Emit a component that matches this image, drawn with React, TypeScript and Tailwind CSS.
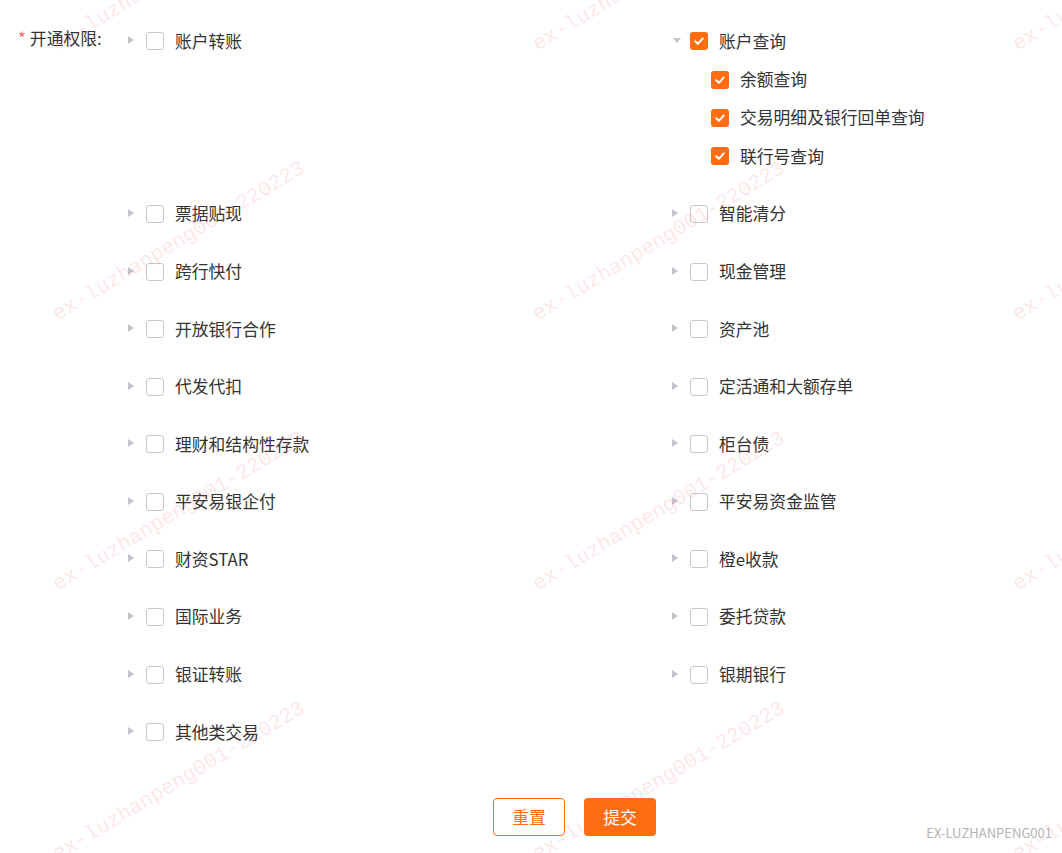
import React from 'react'

type Node = { label: string; checked?: boolean; open?: boolean; children?: Node[] }

const LEFT: Node[] = [
  { label: '账户转账' },
  { label: '票据贴现' },
  { label: '跨行快付' },
  { label: '开放银行合作' },
  { label: '代发代扣' },
  { label: '理财和结构性存款' },
  { label: '平安易银企付' },
  { label: '财资STAR' },
  { label: '国际业务' },
  { label: '银证转账' },
  { label: '其他类交易' },
]

const RIGHT: Node[] = [
  {
    label: '账户查询', checked: true, open: true,
    children: [
      { label: '余额查询', checked: true },
      { label: '交易明细及银行回单查询', checked: true },
      { label: '联行号查询', checked: true },
    ],
  },
  { label: '智能清分' },
  { label: '现金管理' },
  { label: '资产池' },
  { label: '定活通和大额存单' },
  { label: '柜台债' },
  { label: '平安易资金监管' },
  { label: '橙e收款' },
  { label: '委托贷款' },
  { label: '银期银行' },
]

const MARKS: [number, number][] = []
for (const y of [55, 325, 595, 865]) for (const x of [55, 535, 1015]) MARKS.push([x, y])

function Box({ checked }: { checked?: boolean }) {
  if (checked) {
    return (
      <span className="w-[18px] h-[18px] rounded-[3px] bg-[#ff6d12] flex items-center justify-center shrink-0">
        <svg width="12" height="12" viewBox="0 0 12 12" fill="none">
          <path d="M2.2 6.2 L4.9 8.8 L9.8 3.4" stroke="#fff" strokeWidth="1.9" strokeLinecap="round" strokeLinejoin="round" />
        </svg>
      </span>
    )
  }
  return <span className="w-[18px] h-[18px] rounded-[3px] border border-[#c8c8c8] bg-white shrink-0" />
}

function Caret({ open }: { open?: boolean }) {
  return (
    <span className="w-[18px] flex items-center shrink-0 -mt-[2px]">
      {open ? (
        <span className="ml-[1px] w-0 h-0 border-x-[4px] border-x-transparent border-t-[5px] border-t-[#c0c4cc]" />
      ) : (
        <span className="w-0 h-0 border-y-[4px] border-y-transparent border-l-[6px] border-l-[#c0c4cc]" />
      )}
    </span>
  )
}

function TreeItem({ node }: { node: Node }) {
  return (
    <div>
      <div className="flex items-center h-[38.4px]">
        <Caret open={node.open} />
        <Box checked={node.checked} />
        <span className="ml-[11px] text-[16.8px] text-[#333]">{node.label}</span>
      </div>
      {node.open && node.children?.map(c => (
        <div key={c.label} className="flex items-center h-[38.4px] pl-[39px]">
          <Box checked={c.checked} />
          <span className="ml-[11px] text-[16.8px] text-[#333]">{c.label}</span>
        </div>
      ))}
    </div>
  )
}

export default function App() {
  const rows = Math.max(LEFT.length, RIGHT.length)
  const cells: (Node | null)[] = []
  for (let i = 0; i < rows; i++) {
    cells.push(LEFT[i] ?? null)
    cells.push(RIGHT[i] ?? null)
  }

  return (
    <div className="relative w-[1062px] h-[853px] bg-white overflow-hidden"
      style={{ fontFamily: '"Noto Sans CJK SC", "Noto Sans", sans-serif' }}>

      {/* form */}
      <div className="flex pt-[22px]">
        <div className="w-[128px] pl-[18px] flex items-start leading-[32px] text-[16.8px] text-[#333]">
          <span className="text-[#f56c6c] mr-[4px]">*</span>
          <span>开通权限:</span>
        </div>
        <div className="grid grid-cols-[544px_390px] gap-y-[19.2px] items-start">
          {cells.map((n, i) => (n ? <TreeItem key={n.label} node={n} /> : <div key={'e' + i} />))}
        </div>
      </div>

      {/* actions */}
      <div className="ml-[125px] w-[899px] mt-[47px] flex justify-center gap-[19px]">
        <button className="w-[72px] h-[38px] rounded-[4px] border border-[#ff6d12] bg-white text-[#ff6d12] text-[16.8px]">重置</button>
        <button className="w-[72px] h-[38px] rounded-[4px] bg-[#ff6d12] text-white text-[16.8px]">提交</button>
      </div>

      {/* watermark */}
      {MARKS.map(([x, y]) => (
        <span key={`${x}-${y}`}
          className="absolute pointer-events-none whitespace-nowrap text-[21px] leading-none text-[rgba(255,70,70,0.15)] origin-bottom-left -rotate-[31deg]"
          style={{ left: x + 5, top: y - 21, fontFamily: '"Liberation Mono", monospace' }}>
          ex-luzhanpeng001-220223
        </span>
      ))}

      <span className="absolute right-[10px] bottom-[11px] text-[13px] text-[#b4b4b4]">EX-LUZHANPENG001</span>
    </div>
  )
}
